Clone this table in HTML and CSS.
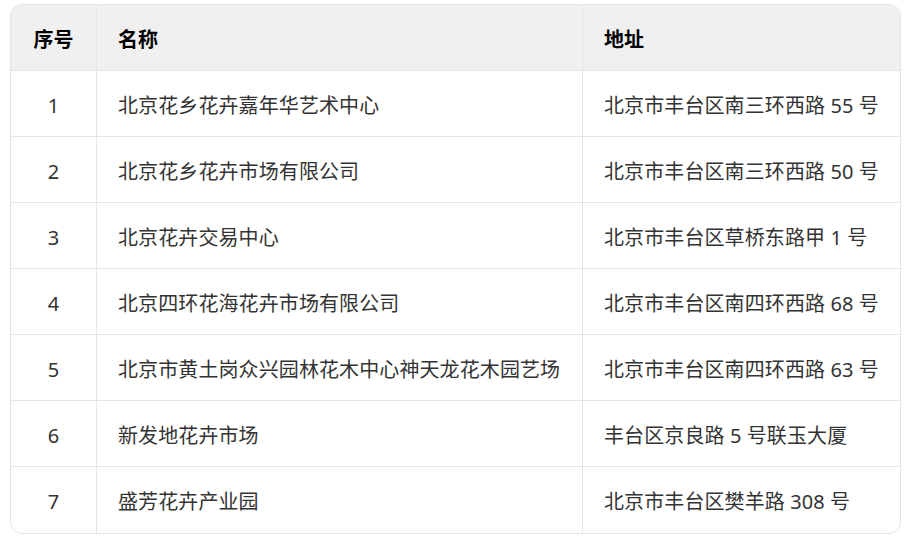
FILE: index.html
```html
<!DOCTYPE html>
<html lang="zh-CN">
<head>
<meta charset="utf-8">
<link rel="stylesheet" href="styles.css">
</head>
<body>
<div class="wrap">
<table class="tbl">
<colgroup><col class="c1"><col class="c2"><col class="c3"></colgroup>
<thead>
<tr><th class="num">序号</th><th>名称</th><th>地址</th></tr>
</thead>
<tbody>
<tr><td class="num">1</td><td>北京花乡花卉嘉年华艺术中心</td><td>北京市丰台区南三环西路 55 号</td></tr>
<tr><td class="num">2</td><td>北京花乡花卉市场有限公司</td><td>北京市丰台区南三环西路 50 号</td></tr>
<tr><td class="num">3</td><td>北京花卉交易中心</td><td>北京市丰台区草桥东路甲 1 号</td></tr>
<tr><td class="num">4</td><td>北京四环花海花卉市场有限公司</td><td>北京市丰台区南四环西路 68 号</td></tr>
<tr><td class="num">5</td><td>北京市黄土岗众兴园林花木中心神天龙花木园艺场</td><td>北京市丰台区南四环西路 63 号</td></tr>
<tr><td class="num">6</td><td>新发地花卉市场</td><td>丰台区京良路 5 号联玉大厦</td></tr>
<tr><td class="num">7</td><td>盛芳花卉产业园</td><td>北京市丰台区樊羊路 308 号</td></tr>
</tbody>
</table>
</div>
</body>
</html>
```
FILE: styles.css
```css
html, body { margin: 0; padding: 0; background: #fff; }
.wrap { padding: 4px 10px 0 10px; }
.tbl {
  width: 891px;
  table-layout: fixed;
  border-collapse: separate;
  border-spacing: 0;
  border: 1px solid #e5e5e5;
  border-radius: 12px;
  overflow: hidden;
  font-family: "Noto Sans", "Noto Sans CJK SC", sans-serif;
  font-size: 20px;
  letter-spacing: 0.1px;
  color: #333;
}
.c1 { width: 86px; }
.c2 { width: 486px; }
.c3 { width: 317px; }
.tbl th, .tbl td {
  height: 66px;
  padding: 4px 21px 0 21px;
  text-align: left;
  vertical-align: middle;
  border-right: 1px solid #e5e5e5;
  border-bottom: 1px solid #e5e5e5;
  box-sizing: border-box;
  white-space: nowrap;
  line-height: 1;
}
.tbl th:last-child, .tbl td:last-child { border-right: none; }
.tbl tbody tr:last-child td { border-bottom: none; }
.tbl th { background: #f0f0f0; color: #000; font-weight: 700; }
.tbl .num { text-align: center; padding-left: 0; padding-right: 0; }
```
